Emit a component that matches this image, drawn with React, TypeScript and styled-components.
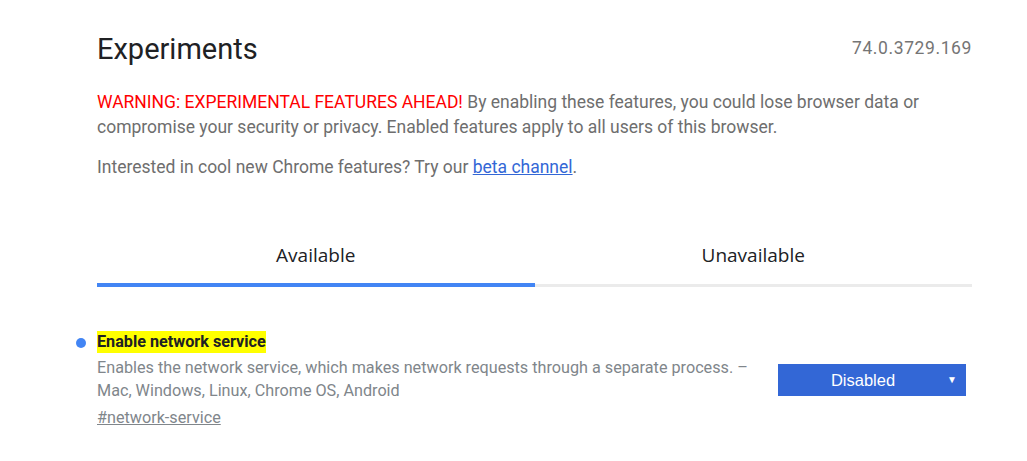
import React from "react";
import styled, { createGlobalStyle } from "styled-components";

const Global = createGlobalStyle`
  html, body { margin: 0; padding: 0; background: #fff; }
  body { font-family: Roboto, "Liberation Sans", sans-serif; }
`;

const Page = styled.div`
  width: 875px;
  margin-left: 97px;
  padding-top: 30px;
`;

const Header = styled.div`
  display: flex;
  justify-content: space-between;
  align-items: center;
`;

const Title = styled.h1`
  margin: 0;
  font-weight: 400;
  font-size: 29px;
  line-height: 38px;
  color: #202124;
`;

const Version = styled.span`
  font-size: 17.5px;
  letter-spacing: 0.6px;
  color: #757575;
  margin-top: -2px;
`;

const Para = styled.p<{ $gap?: number }>`
  margin: ${(p) => p.$gap ?? 0}px 0 0;
  font-size: 17.5px;
  line-height: 25px;
  color: #6e6e6e;
`;

const Warn = styled.span`
  color: #f00;
`;

const Link = styled.a`
  color: #3367d6;
  text-decoration: underline;
`;

const Tabs = styled.div`
  display: grid;
  grid-template-columns: 1fr 1fr;
  margin-top: 46px;
`;

const Tab = styled.div<{ $active?: boolean }>`
  display: flex;
  align-items: center;
  justify-content: center;
  height: 53px;
  padding-top: 2px;
  padding-bottom: ${(p) => (p.$active ? 2 : 3)}px;
  font-family: "Open Sans", sans-serif;
  font-size: 19px;
  color: #202124;
  border-bottom: ${(p) => (p.$active ? "4px solid #4285f4" : "3px solid #ebebeb")};
`;

const Feature = styled.div`
  position: relative;
  display: flex;
  justify-content: space-between;
  margin-top: 43px;
`;

const Dot = styled.span`
  position: absolute;
  left: -21px;
  top: 8px;
  width: 10px;
  height: 10px;
  border-radius: 50%;
  background: #4285f4;
`;

const Info = styled.div`
  display: flex;
  flex-direction: column;
  align-items: flex-start;
`;

const FeatureTitle = styled.h2`
  margin: 1px 0 0;
  font-size: 16.2px;
  font-weight: 700;
  line-height: 22px;
  color: #202124;
  background: #ffff00;
`;

const Desc = styled.p`
  margin: 3px 0 0;
  font-size: 16.2px;
  line-height: 23px;
  color: #80868b;
  width: 660px;
`;

const Anchor = styled.a`
  margin-top: 4px;
  font-size: 16.2px;
  line-height: 23px;
  color: #80868b;
  text-decoration: underline;
`;

const Select = styled.div`
  position: relative;
  margin-top: 34px;
  margin-right: 6px;
  width: 188px;
  height: 32px;
  background: #3367d6;
  color: #fff;
  display: flex;
  align-items: center;
  justify-content: center;
  font-family: "Liberation Sans", Arial, sans-serif;
  font-size: 16.5px;
  padding-right: 18px;
  box-sizing: border-box;
`;

const Arrow = styled.span`
  position: absolute;
  right: 9px;
  top: 10px;
  font-size: 10px;
  line-height: 12px;
`;

export default function App() {
  return (
    <>
      <Global />
      <Page>
        <Header>
          <Title>Experiments</Title>
          <Version>74.0.3729.169</Version>
        </Header>
        <Para $gap={22}>
          <Warn>WARNING: EXPERIMENTAL FEATURES AHEAD!</Warn> By enabling these features, you could lose browser data or compromise your security or privacy. Enabled features apply to all users of this browser.
        </Para>
        <Para $gap={15}>
          Interested in cool new Chrome features? Try our <Link href="#">beta channel</Link>.
        </Para>
        <Tabs>
          <Tab $active>Available</Tab>
          <Tab>Unavailable</Tab>
        </Tabs>
        <Feature>
          <Dot />
          <Info>
            <FeatureTitle>Enable network service</FeatureTitle>
            <Desc>
              Enables the network service, which makes network requests through a separate process. – Mac, Windows, Linux, Chrome OS, Android
            </Desc>
            <Anchor href="#">#network-service</Anchor>
          </Info>
          <Select>
            Disabled
            <Arrow>▼</Arrow>
          </Select>
        </Feature>
      </Page>
    </>
  );
}
